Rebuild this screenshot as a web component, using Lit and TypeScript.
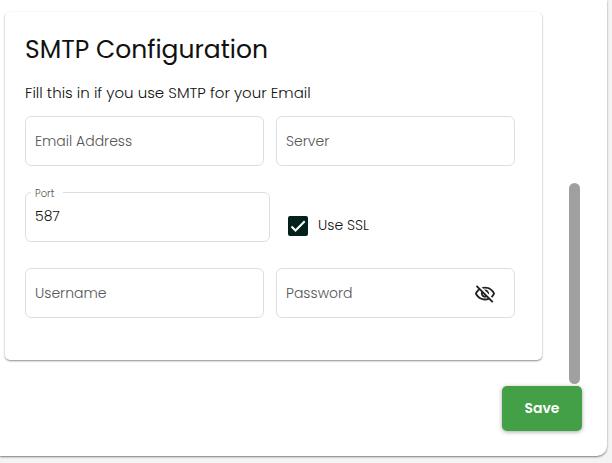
import { LitElement, html, css, nothing } from "lit";
import { customElement, property, state } from "lit/decorators.js";

@customElement("text-field")
class TextField extends LitElement {
  @property() label = "";
  @property() value = "";
  @property() type = "text";
  @state() private revealed = false;

  static styles = css`
    :host {
      display: block;
      min-width: 0;
    }
    .field {
      position: relative;
      display: flex;
      align-items: center;
      box-sizing: border-box;
      height: 50px;
      border: 1px solid #dedede;
      border-radius: 6px;
      background: #fff;
    }
    .field:focus-within {
      border-color: #43a047;
    }
    .input {
      flex: 1;
      min-width: 0;
      height: 100%;
      box-sizing: border-box;
      padding: 0 9px 2px;
      border: 0;
      outline: 0;
      background: none;
      color: #111;
      font: inherit;
    }
    .label {
      position: absolute;
      top: -6px;
      left: 5px;
      padding: 0 9px 0 4px;
      background: #fff;
      color: #555;
      font-size: 10px;
      line-height: 14px;
      pointer-events: none;
    }
    .input:placeholder-shown:not(:focus) + .label {
      top: 14px;
      font-size: 14px;
      line-height: 20px;
    }
    .toggle {
      display: flex;
      margin-right: 18px;
      padding: 2px 0 0;
      border: 0;
      background: none;
      color: #212121;
      cursor: pointer;
    }
    .icon {
      width: 22px;
      height: 22px;
      fill: currentColor;
    }
  `;

  render() {
    const secret = this.type === "password";
    return html`
      <div class="field">
        <input
          id="control"
          class="input"
          type=${secret && this.revealed ? "text" : this.type}
          placeholder=" "
          .value=${this.value}
          @input=${(e: Event) => (this.value = (e.target as HTMLInputElement).value)}
        />
        <label class="label" for="control">${this.label}</label>
        ${secret
          ? html`<button
              class="toggle"
              type="button"
              aria-label="Toggle password visibility"
              @click=${() => (this.revealed = !this.revealed)}
            >
              <svg class="icon" viewBox="0 0 24 24" aria-hidden="true">
                <path
                  d="M12 6c3.79 0 7.17 2.13 8.82 5.5-.59 1.22-1.42 2.27-2.41 3.12l1.41 1.41c1.39-1.23 2.49-2.77 3.18-4.53C21.27 7.11 17 4 12 4c-1.27 0-2.49.2-3.64.57l1.65 1.65C10.66 6.09 11.32 6 12 6zm-1.07 1.14L13 9.21c.57.25 1.03.71 1.28 1.28l2.07 2.07c.08-.34.14-.7.14-1.07C16.5 9.01 14.48 7 12 7c-.37 0-.72.05-1.07.14zM2.01 3.87l2.68 2.68C3.06 7.83 1.77 9.53 1 11.5 2.73 15.89 7 19 12 19c1.52 0 2.98-.29 4.32-.82l3.42 3.42 1.41-1.41L3.42 2.45 2.01 3.87zm7.5 7.5l2.61 2.61c-.04.01-.08.02-.12.02-1.38 0-2.5-1.12-2.5-2.5 0-.05.01-.08.01-.13zm-3.4-3.4l1.75 1.75c-.23.55-.36 1.15-.36 1.78 0 2.48 2.02 4.5 4.5 4.5.63 0 1.23-.13 1.77-.36l.98.98c-.88.24-1.8.38-2.75.38-3.79 0-7.17-2.13-8.82-5.5.7-1.43 1.72-2.61 2.93-3.53z"
                />
              </svg>
            </button>`
          : nothing}
      </div>
    `;
  }
}

@customElement("app-root")
class AppRoot extends LitElement {
  @state() private ssl = true;

  static styles = css`
    :host {
      display: block;
      box-sizing: border-box;
      min-height: 100vh;
      padding: 0 5px 7px 0;
      background: #f4f4f4;
      color: #111;
      font-family: Poppins, Inter, sans-serif;
      font-size: 14px;
      font-weight: 300;
      line-height: 20px;
    }
    .panel {
      padding: 12px 25px 25px 5px;
      border-radius: 0 0 10px 0;
      background: #fff;
      box-shadow: 0 1px 2px rgba(0, 0, 0, 0.5);
    }
    .scroller {
      display: flex;
      gap: 27px;
      padding-right: 2px;
    }
    .card {
      flex: 1;
      min-width: 0;
      margin-bottom: 24px;
      padding: 20px 27px 42px 20px;
      box-sizing: border-box;
      border-radius: 5px;
      background: #fff;
      box-shadow: 0 1px 2px rgba(0, 0, 0, 0.45);
    }
    .thumb {
      align-self: flex-end;
      width: 11px;
      height: 201px;
      border-radius: 6px;
      background: #a0a0a0;
    }
    .title {
      margin: 0;
      font-size: 25px;
      font-weight: 400;
      line-height: 36px;
    }
    .hint {
      margin: 15px 0 13px;
      font-size: 15px;
      line-height: 20px;
    }
    .fields {
      display: grid;
      gap: 26px;
    }
    .pair {
      display: grid;
      grid-template-columns: 1fr 1fr;
      gap: 12px;
    }
    .pair.joined {
      gap: 0;
    }
    .option {
      display: flex;
      align-items: center;
      gap: 10px;
      padding: 18px 0 0 18px;
    }
    .caption {
      padding-bottom: 2px;
    }
    .tick {
      display: grid;
      width: 20px;
      height: 20px;
    }
    .box,
    .mark {
      grid-area: 1 / 1;
      width: 20px;
      height: 20px;
      margin: 0;
    }
    .box {
      appearance: none;
      box-sizing: border-box;
      border: 2px solid #757575;
      border-radius: 2px;
    }
    .box:checked {
      border-color: #03211b;
      background: #03211b;
    }
    .mark {
      fill: none;
      stroke: #fff;
      stroke-width: 2;
      pointer-events: none;
    }
    .actions {
      display: flex;
      justify-content: flex-end;
      padding-top: 2px;
    }
    .save {
      width: 80px;
      height: 45px;
      padding: 0 0 2px;
      border: 0;
      border-radius: 5px;
      background: #43a047;
      box-shadow: 0 1px 4px rgba(0, 0, 0, 0.35);
      color: #fff;
      font: inherit;
      font-weight: 600;
      cursor: pointer;
    }
  `;

  render() {
    return html`
      <main class="panel">
        <div class="scroller">
          <section class="card">
            <h2 class="title">SMTP Configuration</h2>
            <p class="hint">Fill this in if you use SMTP for your Email</p>
            <div class="fields">
              <div class="pair">
                <text-field label="Email Address" type="email"></text-field>
                <text-field label="Server"></text-field>
              </div>
              <div class="pair joined">
                <text-field label="Port" value="587"></text-field>
                <div class="option">
                  <span class="tick">
                    <input
                      id="ssl"
                      class="box"
                      type="checkbox"
                      .checked=${this.ssl}
                      @change=${(e: Event) => (this.ssl = (e.target as HTMLInputElement).checked)}
                    />
                    <svg class="mark" viewBox="0 0 20 20" aria-hidden="true">
                      <path d="M3.5 10.5l4 4 9.2-9.2" />
                    </svg>
                  </span>
                  <label class="caption" for="ssl">Use SSL</label>
                </div>
              </div>
              <div class="pair">
                <text-field label="Username"></text-field>
                <text-field label="Password" type="password"></text-field>
              </div>
            </div>
          </section>
          <div class="thumb"></div>
        </div>
        <div class="actions">
          <button class="save" type="button">Save</button>
        </div>
      </main>
    `;
  }
}
